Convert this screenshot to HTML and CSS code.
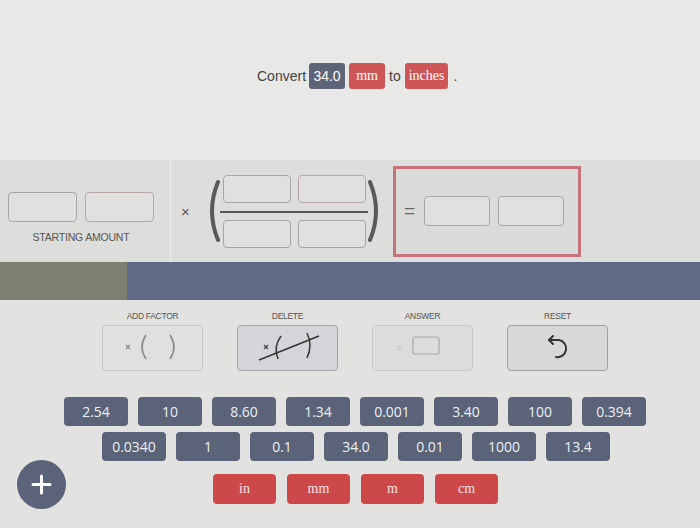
FILE: index.html
```html
<!DOCTYPE html>
<html>
<head>
<meta charset="utf-8">
<link rel="stylesheet" href="styles.css">
</head>
<body>
<div class="page">
  <header class="top">
    <div class="convert">
      <span class="word">Convert</span>
      <span class="chip chip-num">34.0</span>
      <span class="chip chip-unit">mm</span>
      <span class="word">to</span>
      <span class="chip chip-unit">inches</span>
      <span class="word dot">.</span>
    </div>
  </header>

  <section class="problem">
    <div class="start">
      <div class="pair">
        <div class="slot"></div>
        <div class="slot slot-pink"></div>
      </div>
      <div class="cap">STARTING AMOUNT</div>
    </div>
    <div class="equation">
      <span class="times">×</span>
      <svg class="paren" width="14" height="62" viewBox="0 0 14 62"><path d="M12 2 Q0 31 12 60" fill="none" stroke="#595959" stroke-width="4" stroke-linecap="round"/></svg>
      <div class="fraction">
        <div class="pair">
          <div class="slot fslot"></div>
          <div class="slot fslot slot-pink"></div>
        </div>
        <div class="frac-line"></div>
        <div class="pair">
          <div class="slot fslot"></div>
          <div class="slot fslot"></div>
        </div>
      </div>
      <svg class="paren" width="14" height="62" viewBox="0 0 14 62"><path d="M2 2 Q14 31 2 60" fill="none" stroke="#595959" stroke-width="4" stroke-linecap="round"/></svg>
      <div class="answer">
        <span class="eq">=</span>
        <div class="pair">
          <div class="slot aslot"></div>
          <div class="slot aslot"></div>
        </div>
      </div>
    </div>
  </section>

  <div class="band">
    <div class="band-left"></div>
    <div class="band-right"></div>
  </div>

  <section class="actions">
    <div class="action">
      <div class="action-label">ADD FACTOR</div>
      <div class="action-btn btn-add">
        <svg width="101" height="46" viewBox="0 0 101 46">
          <path d="M24 20 L28 24 M28 20 L24 24" stroke="#8a8a8a" stroke-width="1.2"/>
          <path d="M44 10 Q36 22 44 34" fill="none" stroke="#8a8a8a" stroke-width="1.6"/>
          <path d="M68 10 Q76 22 68 34" fill="none" stroke="#8a8a8a" stroke-width="1.6"/>
        </svg>
      </div>
    </div>
    <div class="action">
      <div class="action-label">DELETE</div>
      <div class="action-btn btn-delete">
        <svg width="101" height="46" viewBox="0 0 101 46">
          <path d="M27 20 L31 24 M31 20 L27 24" stroke="#444" stroke-width="1.2"/>
          <path d="M44 11 Q36 22 41 34" fill="none" stroke="#3a3a3a" stroke-width="1.6"/>
          <path d="M70 8 Q76 20 70 33" fill="none" stroke="#3a3a3a" stroke-width="1.6"/>
          <path d="M22 35 L82 11" stroke="#333" stroke-width="1.4"/>
        </svg>
      </div>
    </div>
    <div class="action">
      <div class="action-label">ANSWER</div>
      <div class="action-btn btn-answer">
        <svg width="101" height="46" viewBox="0 0 101 46">
          <path d="M25 21 H30 M25 24 H30" stroke="#bdbdbd" stroke-width="1.2"/>
          <rect x="41" y="12" width="26" height="17" rx="2" fill="none" stroke="#a9a9a9" stroke-width="1.2"/>
        </svg>
      </div>
    </div>
    <div class="action">
      <div class="action-label">RESET</div>
      <div class="action-btn btn-reset">
        <svg width="101" height="46" viewBox="0 0 101 46">
          <path d="M42 15 H52 A8.5 8.5 0 1 1 49 32" fill="none" stroke="#333" stroke-width="2" stroke-linecap="round"/>
          <path d="M46 11 L42 15 L46 19" fill="none" stroke="#333" stroke-width="2" stroke-linecap="round" stroke-linejoin="round"/>
        </svg>
      </div>
    </div>
  </section>

  <section class="numbers">
    <div class="num-row row-a">
      <div class="num">2.54</div>
      <div class="num">10</div>
      <div class="num">8.60</div>
      <div class="num">1.34</div>
      <div class="num">0.001</div>
      <div class="num">3.40</div>
      <div class="num">100</div>
      <div class="num">0.394</div>
    </div>
    <div class="num-row row-b">
      <div class="num">0.0340</div>
      <div class="num">1</div>
      <div class="num">0.1</div>
      <div class="num">34.0</div>
      <div class="num">0.01</div>
      <div class="num">1000</div>
      <div class="num">13.4</div>
    </div>
  </section>

  <div class="bottom">
    <div class="plus">
      <svg width="49" height="49" viewBox="0 0 49 49"><path d="M24.5 16 V33 M16 24.5 H33" stroke="#fff" stroke-width="3" stroke-linecap="round"/></svg>
    </div>
    <div class="units">
      <div class="unit">in</div>
      <div class="unit">mm</div>
      <div class="unit">m</div>
      <div class="unit">cm</div>
    </div>
  </div>
</div>
</body>
</html>
```

FILE: styles.css
```css
* { box-sizing: border-box; }
html, body { margin: 0; padding: 0; }
body {
  width: 700px;
  height: 528px;
  overflow: hidden;
  background: #e2e2e0;
  font-family: "Liberation Sans", Arial, sans-serif;
}
.page { width: 700px; height: 528px; }

.top {
  height: 160px;
  background: #e8e8e6;
  padding-top: 63px;
}
.convert {
  display: flex;
  align-items: center;
  height: 26px;
  padding-left: 257px;
  gap: 4px;
}
.word { font-size: 14px; color: #444; }
.word:first-child { margin-right: -1px; }
.dot { margin-left: 1px; }
.chip {
  height: 26px;
  display: flex;
  align-items: center;
  justify-content: center;
  border-radius: 3px;
  color: #fff;
  font-size: 14px;
}
.chip-num {
  width: 36px;
  background: #5e6478;
  font-family: "Liberation Sans", Arial, sans-serif;
}
.chip-unit {
  padding: 0 4px;
  min-width: 36px;
  background: #cf5656;
  font-family: "Liberation Serif", "Times New Roman", serif;
}

.problem {
  height: 102px;
  background: #dddddb;
  display: flex;
}
.start {
  width: 171px;
  border-right: 1px solid #ededeb;
  padding-top: 32px;
  padding-left: 8px;
}
.pair { display: flex; gap: 8px; }
.slot {
  width: 69px;
  height: 30px;
  border: 1px solid #a6a6a6;
  border-radius: 4px;
  background: #e0e0de;
}
.slot-pink { border-color: #b7a6a8; }
.cap {
  margin-top: 9px;
  width: 146px;
  text-align: center;
  font-size: 10.5px;
  line-height: 12px;
  color: #555;
  letter-spacing: -0.2px;
}

.equation {
  display: flex;
  align-items: center;
}
.times {
  margin-left: 10px;
  font-size: 15px;
  color: #555;
  width: 9px;
}
.paren { display: block; }
.times + .paren { margin-left: 16px; }
.fraction {
  width: 148px;
  display: flex;
  flex-direction: column;
  align-items: center;
}
.fraction .pair { gap: 7px; }
.fslot { width: 68px; height: 28px; }
.frac-line {
  width: 148px;
  height: 2px;
  background: #555;
  margin: 8px 0 7px;
}
.answer {
  margin-left: 11px;
  width: 188px;
  height: 91px;
  border: 3px solid #c7717a;
  background: #dadad8;
  display: flex;
  align-items: center;
  padding-left: 8px;
}
.eq {
  width: 12px;
  margin-right: 8px;
  font-size: 19px;
  color: #666;
}
.aslot { width: 66px; height: 30px; }

.band {
  height: 38px;
  display: grid;
  grid-template-columns: 127px 1fr;
}
.band-left { background: #7d8070; }
.band-right { background: #5f6b84; }

.actions {
  display: flex;
  gap: 34px;
  padding-left: 102px;
  padding-top: 11px;
}
.action { width: 101px; }
.action-label {
  height: 10px;
  line-height: 10px;
  font-size: 8.5px;
  text-align: center;
  color: #555;
  letter-spacing: -0.3px;
}
.action-btn {
  margin-top: 4px;
  width: 101px;
  height: 46px;
  border-radius: 4px;
  border: 1px solid #c4c4c4;
  overflow: hidden;
}
.action-btn svg { display: block; margin: -1px; }
.btn-add { background: #e0e0df; border-color: #c6c6c6; }
.btn-delete { background: #d3d5d8; border-color: #a2a4a8; }
.btn-answer { background: #dcdcdb; border-color: #c9c9c9; }
.btn-reset { background: #d6d8da; border-color: #9c9ea0; }

.numbers { margin-top: 26px; }
.num-row { display: flex; gap: 10px; }
.row-a { padding-left: 64px; }
.row-b { padding-left: 102px; margin-top: 6px; }
.num {
  width: 64px;
  height: 29px;
  border-radius: 4px;
  background: #5b6378;
  color: #eef0f4;
  font-family: "Open Sans", sans-serif;
  font-size: 14px;
  display: flex;
  align-items: center;
  justify-content: center;
}

.bottom {
  display: flex;
  align-items: flex-start;
  margin-top: -1px;
}
.plus {
  margin-left: 17px;
  width: 49px;
  height: 49px;
  border-radius: 50%;
  background: #5b6378;
}
.plus svg { display: block; }
.units {
  display: flex;
  gap: 11px;
  margin-left: 147px;
  margin-top: 14px;
}
.unit {
  width: 63px;
  height: 30px;
  border-radius: 4px;
  background: #cd4949;
  color: #f6e3e3;
  font-family: "Liberation Serif", "Times New Roman", serif;
  font-size: 14px;
  display: flex;
  align-items: center;
  justify-content: center;
}
```
